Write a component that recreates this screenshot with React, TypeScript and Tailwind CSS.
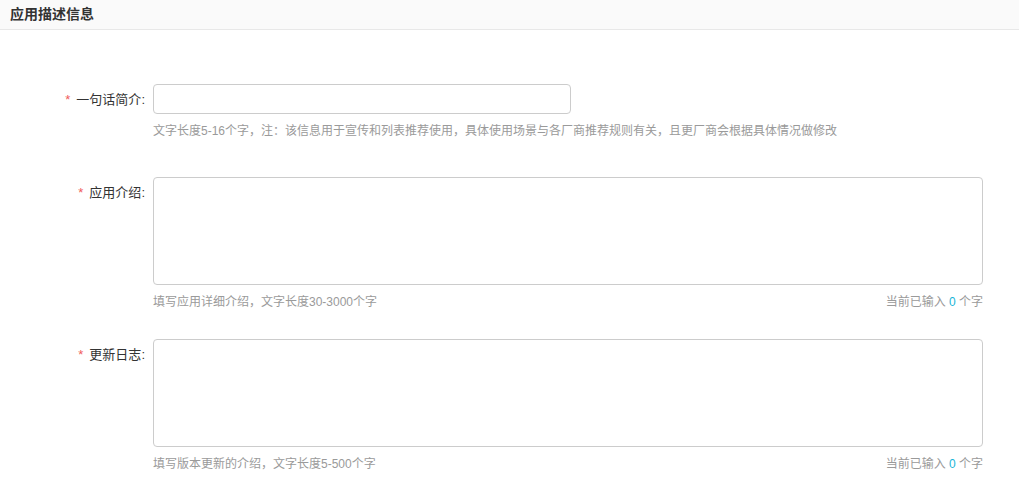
const font = { fontFamily: '"Liberation Sans", "Noto Sans CJK SC", sans-serif' };

function Label({ text }: { text: string }) {
  return (
    <div className="w-[145px] shrink-0 text-right text-[13px] leading-[20px] text-[#333]">
      <span className="mr-[6px] text-[#f05b5b]">*</span>
      {text}:
    </div>
  );
}

function Counter() {
  return (
    <span>
      当前已输入 <span className="text-[#19b5d8]">0</span> 个字
    </span>
  );
}

export default function App() {
  return (
    <div className="min-h-[489px] w-[1019px] bg-white" style={font}>
      <div className="h-[30px] border-b border-[#e8e8e8] bg-[#fafafa] pl-[10px] text-[14px] leading-[29px] font-bold text-[#333]">
        应用描述信息
      </div>

      <div className="mt-[54px] flex">
        <div className="flex h-[30px] items-center pt-[2px]">
          <Label text="一句话简介" />
        </div>
        <div className="ml-[8px]">
          <input className="block h-[30px] w-[418px] rounded-[4px] border border-[#ccc] px-2 text-[13px] outline-none" />
          <div className="mt-[8px] text-[12px] leading-[18px] text-[#9a9a9a]">
            文字长度5-16个字，注：该信息用于宣传和列表推荐使用，具体使用场景与各厂商推荐规则有关，且更厂商会根据具体情况做修改
          </div>
        </div>
      </div>

      <div className="mt-[37px] flex">
        <div className="pt-[6px]">
          <Label text="应用介绍" />
        </div>
        <div className="ml-[8px] w-[830px]">
          <textarea className="block h-[108px] w-full resize-none rounded-[4px] border border-[#ccc] p-2 text-[13px] outline-none" />
          <div className="mt-[8px] flex justify-between text-[12px] leading-[18px] text-[#9a9a9a]">
            <span>填写应用详细介绍，文字长度30-3000个字</span>
            <Counter />
          </div>
        </div>
      </div>

      <div className="mt-[28px] flex">
        <div className="pt-[6px]">
          <Label text="更新日志" />
        </div>
        <div className="ml-[8px] w-[830px]">
          <textarea className="block h-[108px] w-full resize-none rounded-[4px] border border-[#ccc] p-2 text-[13px] outline-none" />
          <div className="mt-[8px] flex justify-between text-[12px] leading-[18px] text-[#9a9a9a]">
            <span>填写版本更新的介绍，文字长度5-500个字</span>
            <Counter />
          </div>
        </div>
      </div>
    </div>
  );
}
